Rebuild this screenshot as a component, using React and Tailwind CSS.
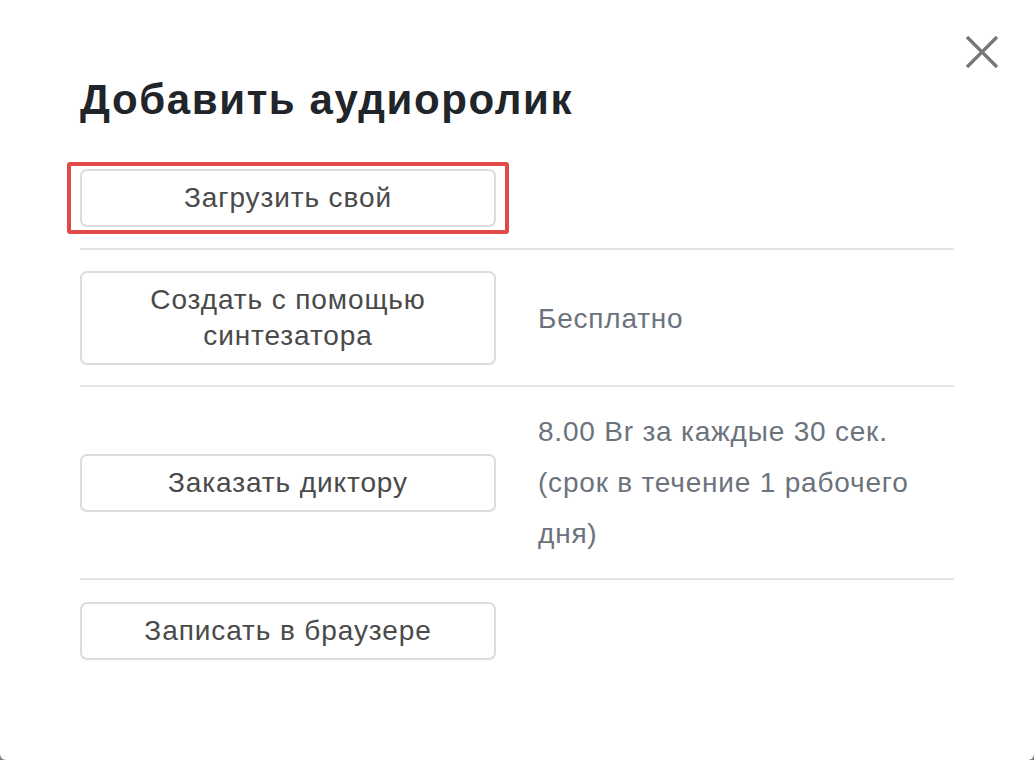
const options = [
  { label: "Загрузить свой", note: null, marked: true, row: "pb-[21px]" },
  {
    label: "Создать с помощью синтезатора",
    note: ["Бесплатно"],
    tall: true,
    row: "pt-[21px] pb-[20px]",
  },
  {
    label: "Заказать диктору",
    note: ["8.00 Br за каждые 30 сек.", "(срок в течение 1 рабочего", "дня)"],
    row: "py-[19px]",
  },
  { label: "Записать в браузере", note: null, row: "pt-[22px]" },
];

const OptionButton = ({ label, tall, marked }) => (
  <div className="relative w-[416px] shrink-0">
    {marked && (
      <span className="absolute -left-[13px] -right-[13px] -top-[7px] -bottom-[7px] border-4 border-[#e24a4a] rounded-[3px] pointer-events-none" />
    )}
    <button
      className={`w-full ${tall ? "h-[94px] px-8" : "h-[58px]"} border-2 border-[#dcdcdc] rounded-[7px] bg-white text-[28px] leading-[36px] tracking-[0.9px] text-[#4a4a4a]`}
    >
      {label}
    </button>
  </div>
);

export default function App() {
  return (
    <div className="w-[1034px] h-[760px] bg-[#7d7d7d] font-['Liberation_Sans',Arial,sans-serif]">
      <div className="relative w-full h-full bg-white rounded-b-[6px] pl-[80px] pr-[80px] pt-[76px]">
        <button className="absolute left-[965px] top-[35px] text-[#777777]">
          <svg width="34" height="34" viewBox="0 0 34 34" fill="none" stroke="currentColor" strokeWidth="3.2">
            <path d="M2 2 32 32M32 2 2 32" />
          </svg>
        </button>

        <h2 className="text-[42px] leading-[48px] font-bold text-[#212529] tracking-[1.6px]">
          Добавить аудиоролик
        </h2>

        <div className="mt-[45px]">
          {options.map((o, i) => (
            <div
              key={o.label}
              className={`flex items-center gap-[42px] ${o.row} ${
                i < options.length - 1 ? "border-b-2 border-[#e4e4e8]" : ""
              }`}
            >
              <OptionButton label={o.label} tall={o.tall} marked={o.marked} />
              {o.note && (
                <div className="text-[28px] leading-[51px] tracking-[0.8px] text-[#6c737c]">
                  {o.note.map((line) => (
                    <div key={line}>{line}</div>
                  ))}
                </div>
              )}
            </div>
          ))}
        </div>
      </div>
    </div>
  );
}
